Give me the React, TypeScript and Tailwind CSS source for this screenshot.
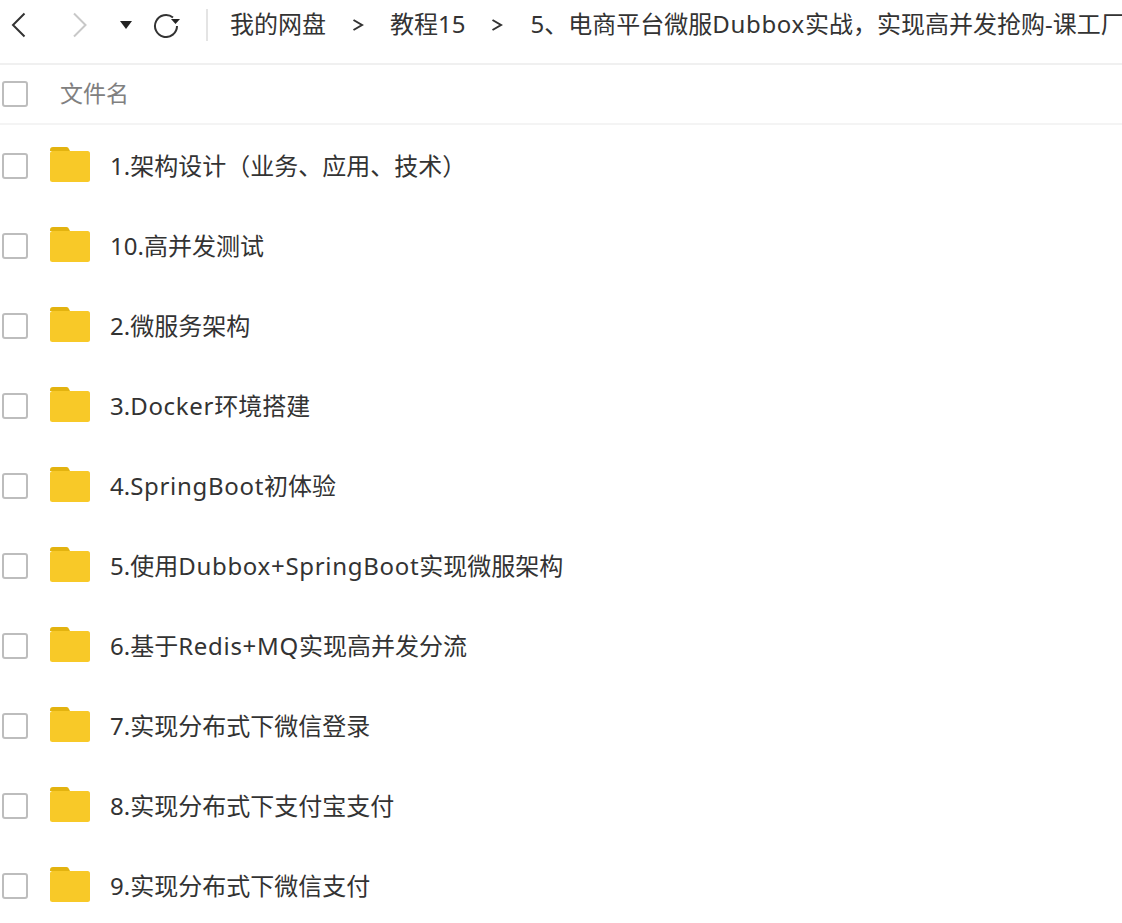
const files = [
  "1.架构设计（业务、应用、技术）",
  "10.高并发测试",
  "2.微服务架构",
  "3.Docker环境搭建",
  "4.SpringBoot初体验",
  "5.使用Dubbox+SpringBoot实现微服架构",
  "6.基于Redis+MQ实现高并发分流",
  "7.实现分布式下微信登录",
  "8.实现分布式下支付宝支付",
  "9.实现分布式下微信支付",
];

// latin runs sit a little wider in the reference than in the installed fonts
function Label({ text }: { text: string }) {
  return (
    <>
      {text.split(/([A-Za-z+]+)/).map((part, i) =>
        /^[A-Za-z+]+$/.test(part) ? (
          <span key={i} className="tracking-[0.7px]">{part}</span>
        ) : (
          part
        ),
      )}
    </>
  );
}

function Checkbox() {
  return <div className="ml-[2px] h-[26px] w-[26px] shrink-0 rounded-[3px] border-2 border-[#bdbdbd] bg-white" />;
}

function FolderIcon() {
  return (
    <svg width="40" height="35" viewBox="0 0 40 35" className="shrink-0">
      <path d="M0 3a3 3 0 0 1 3-3h13a3 3 0 0 1 3 2l1 2H0z" fill="#e3b30f" />
      <rect x="0" y="4" width="40" height="31" rx="2.5" fill="#f8c928" />
    </svg>
  );
}

function Chevron() {
  return (
    <svg width="12" height="14" viewBox="0 0 12 14" className="shrink-0">
      <path d="M1.5 2 10 7l-8.500 5" fill="none" stroke="#333" strokeWidth="2" />
    </svg>
  );
}

export default function App() {
  return (
    <div
      className="h-[923px] w-[1122px] overflow-hidden bg-white text-[#333]"
      style={{ fontFamily: '"Noto Sans", "Noto Sans CJK SC", sans-serif' }}
    >
      <div className="flex h-[65px] items-center overflow-hidden whitespace-nowrap border-b-2 border-[#f0f0f0] pb-[13px]">
        <svg width="16" height="26" viewBox="0 0 16 26" className="ml-[10px] shrink-0">
          <path d="M14.500 1.500 3 13l11.500 11.500" fill="none" stroke="#333" strokeWidth="2" />
        </svg>
        <svg width="16" height="26" viewBox="0 0 16 26" className="ml-[46px] shrink-0">
          <path d="M2 1.500 13.500 13 2 24.500" fill="none" stroke="#c8c8c8" strokeWidth="2" />
        </svg>
        <svg width="12" height="10" viewBox="0 0 12 10" className="ml-[32px] shrink-0">
          <path d="M0 1h12L6 9z" fill="#222" />
        </svg>
        <svg width="28" height="26" viewBox="0 0 28 26" className="ml-[21px] shrink-0">
          <path d="M20 5.500A11 11 0 1 0 24 14" fill="none" stroke="#333" strokeWidth="2" />
          <path d="M18 7h9l-4.500 5z" fill="#222" />
        </svg>
        <div className="ml-[25px] h-[32px] w-[2px] shrink-0 bg-[#e4e4e4]" />
        <span className="ml-[22px] pb-[2px] text-[24px] leading-none">我的网盘</span>
        <div className="ml-[26px]"><Chevron /></div>
        <span className="ml-[26px] pb-[2px] text-[24px] leading-none">教程15</span>
        <div className="ml-[26px]"><Chevron /></div>
        <span className="ml-[27px] pb-[2px] text-[24px] leading-none">
          <Label text="5、电商平台微服Dubbox实战，实现高并发抢购-课工厂" />
        </span>
      </div>
      <div className="flex h-[60px] items-center border-b-2 border-[#f4f4f4]">
        <Checkbox />
        <span className="ml-[32px] pb-[2px] text-[23px] text-[#808080]">文件名</span>
      </div>
      <div className="pt-[1px]">
        {files.map((name) => (
          <div key={name} className="flex h-[80px] items-center">
            <Checkbox />
            <div className="ml-[22px] pb-[3px]"><FolderIcon /></div>
            <span className="ml-[20px] whitespace-nowrap text-[24px]">
              <Label text={name} />
            </span>
          </div>
        ))}
      </div>
    </div>
  );
}
